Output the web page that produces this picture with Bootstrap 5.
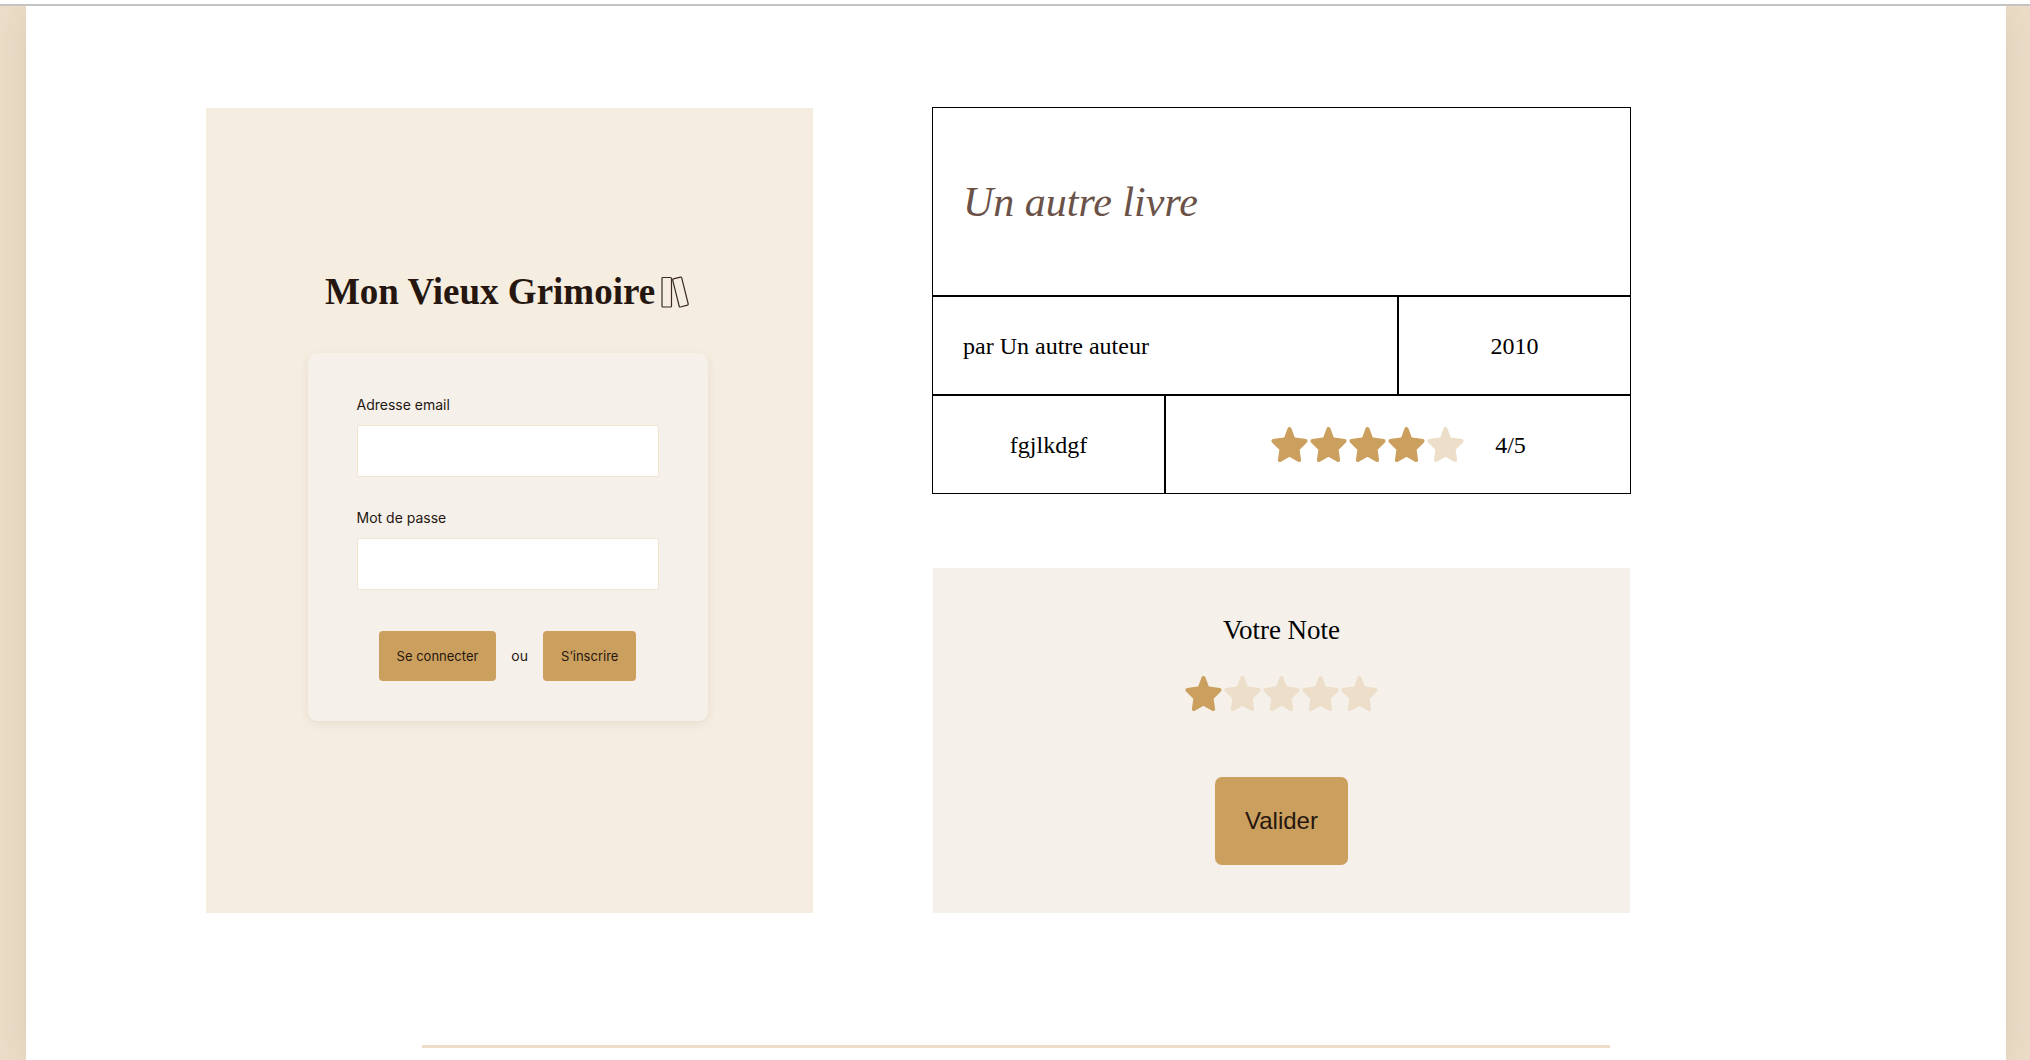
<!DOCTYPE html>
<html lang="fr">
<head>
<meta charset="utf-8">
<meta name="viewport" content="width=device-width, initial-scale=1">
<title>Un autre livre</title>
<link href="https://cdn.jsdelivr.net/npm/bootstrap@5.3.0/dist/css/bootstrap.min.css" rel="stylesheet">
<style>
  :root { --gold: #cb9f5e; --sand: #ecdec8; --cream: #f5f0ea; --ink: #251710; }
  body { background: var(--sand); color: #000; font-family: "Liberation Serif", "Times New Roman", serif; font-size: 24px; line-height: 28px; }
  .topline { height: 6px; border-bottom: 2px solid #c4c4c4; position: relative; z-index: 1; }
  .sheet { margin: 0 24px 0 26px; padding-top: 101px; min-height: calc(100vh - 6px); box-shadow: 0 4px 40px rgba(60, 50, 20, .1); }
  .book-layout { gap: 119px; padding: 0 375px 0 180px; }
  .cover { flex: 607 1 0; min-height: 805px; background: #f5ede0; color: var(--ink); font-family: Inter, "Open Sans", sans-serif; font-size: 14px; line-height: 20px; padding-top: 162px; }
  .cover-inner { margin-right: 4px; }
  .details { flex: 699 1 0; gap: 74px; }
  .brand { font-family: "Liberation Serif", serif; font-weight: 700; font-size: 37px; line-height: 44px; gap: 6px; }
  .login { width: 400px; margin-top: 39px; padding: 42px 49px 40px; background: var(--cream); border-radius: 9px; box-shadow: 0 3px 10px rgba(80, 50, 10, .08); }
  .login .form-control { height: 52px; border: 1px solid #f2e5d2; border-radius: 2px; }
  .login label { margin-bottom: 10px; }
  .login-field + .login-field { margin-top: 31px; }
  .login-actions { margin-top: 41px; gap: 15px; }
  .gold-btn { --bs-btn-bg: var(--gold); --bs-btn-color: var(--ink); --bs-btn-hover-bg: #bb8f4e; --bs-btn-border-width: 0; --bs-btn-line-height: 20px; }
  .login .gold-btn { --bs-btn-font-size: 13px; --bs-btn-padding-y: 15px; --bs-btn-padding-x: 18px; --bs-btn-border-radius: 4px; }
  .facts { display: grid; grid-template-columns: repeat(3, 1fr); }
  .fact { border: 1px solid #000; min-height: 99px; padding: 0 30px; display: flex; align-items: center; justify-content: center; }
  .fact-title { grid-column: span 3; min-height: 189px; justify-content: flex-start; }
  .fact-title h1 { font-size: 42px; line-height: 48px; font-style: italic; font-weight: 400; color: #6b5248; margin: 0; }
  .fact-author { grid-column: span 2; justify-content: flex-start; }
  .fact-score { grid-column: span 2; gap: 30px; }
  .star { width: 39px; height: 35px; display: block; fill: var(--sand); stroke: var(--sand); stroke-width: 4; stroke-linejoin: round; }
  .star.on { fill: var(--gold); stroke: var(--gold); }
  .rate { background: var(--cream); min-height: 345px; padding: 46px 1px 48px; margin: 0 1px; }
  .rate legend { font-size: 27px; line-height: 32px; margin-bottom: 30px; text-align: center; }
  .rate .gold-btn { --bs-btn-font-family: "Liberation Sans", Arial, sans-serif; --bs-btn-font-size: 24px; --bs-btn-line-height: 28px; --bs-btn-padding-y: 30px; --bs-btn-padding-x: 30px; --bs-btn-border-radius: 7px; margin-top: 66px; }
  .divider { width: 60%; height: 3px; margin: 132px auto 0; border: 0; background: var(--sand); opacity: 1; }
</style>
<script src="https://cdn.jsdelivr.net/npm/bootstrap@5.3.0/dist/js/bootstrap.bundle.min.js"></script>
</head>
<body>
<svg class="d-none" aria-hidden="true">
  <symbol id="star" viewBox="0 0 36 35"><path d="M18 2 21.8 12.2 34 14 26 22 27.6 33 18 27.6 8.4 33 10 22 2 14 14.2 12.2Z"/></symbol>
</svg>
<header class="topline bg-white"></header>
<main class="sheet bg-white">
  <div class="book-layout d-flex align-items-end">
    <section class="cover d-flex justify-content-center" aria-label="Couverture">
      <div class="cover-inner d-flex flex-column align-items-center">
        <div class="brand d-flex align-items-center text-nowrap">Mon Vieux Grimoire
          <svg width="29" height="33" viewBox="0 0 29 33" fill="none" stroke="#3b2a22" stroke-width="1.2" aria-hidden="true"><rect x="1" y="1.5" width="9.5" height="29.5" rx="1"/><rect x="14.8" y="1.5" width="9.3" height="29" rx="1" transform="rotate(-14 19.5 16)"/></svg>
        </div>
        <form class="login">
          <div class="login-field">
            <label class="d-block" for="email">Adresse email</label>
            <input class="form-control" type="email" id="email">
          </div>
          <div class="login-field">
            <label class="d-block" for="password">Mot de passe</label>
            <input class="form-control" type="password" id="password">
          </div>
          <div class="login-actions d-flex justify-content-center align-items-center">
            <button type="button" class="btn gold-btn">Se connecter</button>
            <span>ou</span>
            <button type="button" class="btn gold-btn">S’inscrire</button>
          </div>
        </form>
      </div>
    </section>
    <div class="details d-flex flex-column">
      <section class="facts">
        <div class="fact fact-title"><h1>Un autre livre</h1></div>
        <div class="fact fact-author">par Un autre auteur</div>
        <div class="fact">2010</div>
        <div class="fact">fgjlkdgf</div>
        <div class="fact fact-score">
          <div class="d-flex" role="img" aria-label="4 étoiles sur 5">
            <svg class="star on"><use href="#star"/></svg><svg class="star on"><use href="#star"/></svg><svg class="star on"><use href="#star"/></svg><svg class="star on"><use href="#star"/></svg><svg class="star"><use href="#star"/></svg>
          </div>
          <span>4/5</span>
        </div>
      </section>
      <form class="rate d-flex flex-column align-items-center">
        <fieldset>
          <legend>Votre Note</legend>
          <div class="d-flex position-relative">
            <input class="visually-hidden" type="radio" name="note" id="n1" checked><label for="n1" aria-label="1 étoile"><svg class="star on"><use href="#star"/></svg></label>
            <input class="visually-hidden" type="radio" name="note" id="n2"><label for="n2" aria-label="2 étoiles"><svg class="star"><use href="#star"/></svg></label>
            <input class="visually-hidden" type="radio" name="note" id="n3"><label for="n3" aria-label="3 étoiles"><svg class="star"><use href="#star"/></svg></label>
            <input class="visually-hidden" type="radio" name="note" id="n4"><label for="n4" aria-label="4 étoiles"><svg class="star"><use href="#star"/></svg></label>
            <input class="visually-hidden" type="radio" name="note" id="n5"><label for="n5" aria-label="5 étoiles"><svg class="star"><use href="#star"/></svg></label>
          </div>
        </fieldset>
        <button type="button" class="btn gold-btn">Valider</button>
      </form>
    </div>
  </div>
  <hr class="divider">
</main>
</body>
</html>
